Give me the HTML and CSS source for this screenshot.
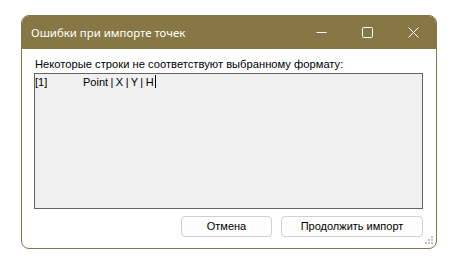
FILE: index.html
```
<!DOCTYPE html>
<html lang="ru">
<head>
    <meta charset="UTF-8">
    <meta name="viewport" content="width=device-width, initial-scale=1.0">
    <title>Ошибки при импорте точек</title>
    <link rel="stylesheet" href="styles.css">
</head>
<body>
    <div class="window">
        <div class="titlebar">
            <span class="title">Ошибки при импорте точек</span>
            <div class="controls">
                <div class="ctl">
                    <svg width="11" height="11" viewBox="0 0 11 11"><path d="M0.5 5.5h10" stroke="#fff" stroke-width="1"/></svg>
                </div>
                <div class="ctl">
                    <svg width="11" height="11" viewBox="0 0 11 11"><rect x="0.5" y="0.5" width="10" height="10" rx="1" fill="none" stroke="#fff" stroke-width="1"/></svg>
                </div>
                <div class="ctl">
                    <svg width="11" height="11" viewBox="0 0 11 11"><path d="M0.5 0.5l10 10M10.5 0.5l-10 10" stroke="#fff" stroke-width="1"/></svg>
                </div>
            </div>
        </div>
        <div class="content">
            <div class="label">Некоторые строки не соответствуют выбранному формату:</div>
            <div class="textbox">
                <div class="line"><span class="num">[1]</span><span class="pts">Point | X | Y | H</span><span class="caret"></span></div>
            </div>
            <div class="buttons">
                <button class="btn btn-cancel">Отмена</button>
                <button class="btn btn-go">Продолжить импорт</button>
            </div>
        </div>
        <svg class="grip" width="8" height="8" viewBox="0 0 8 8">
            <rect x="6" y="0" width="2" height="2" fill="#c4c4c4"/>
            <rect x="3" y="3" width="2" height="2" fill="#c4c4c4"/>
            <rect x="6" y="3" width="2" height="2" fill="#c4c4c4"/>
            <rect x="0" y="6" width="2" height="2" fill="#c4c4c4"/>
            <rect x="3" y="6" width="2" height="2" fill="#c4c4c4"/>
            <rect x="6" y="6" width="2" height="2" fill="#c4c4c4"/>
        </svg>
    </div>
</body>
</html>
```
FILE: styles.css
```
body {
    margin: 0;
    padding: 15px 0 0 21px;
    background: #ffffff;
    font-family: "Liberation Sans", Arial, sans-serif;
}
.window {
    position: relative;
    width: 414px;
    height: 232px;
    border: 1px solid #857645;
    border-radius: 8px;
    background: #ffffff;
    overflow: hidden;
    display: flex;
    flex-direction: column;
}
.titlebar {
    height: 33px;
    background: #877745;
    display: flex;
    align-items: center;
    justify-content: space-between;
}
.title {
    color: #ffffff;
    font-family: "Noto Sans", "Open Sans", sans-serif;
    font-size: 11.4px;
    padding-left: 9px;
    padding-bottom: 1px;
}
.controls {
    display: flex;
    height: 100%;
}
.ctl {
    width: 46px;
    display: flex;
    align-items: center;
    justify-content: center;
}
.content {
    flex: 1;
    display: flex;
    flex-direction: column;
    padding: 9px 13px 0 12px;
}
.label {
    font-size: 11.2px;
    color: #000;
    padding-left: 1px;
    height: 14px;
}
.textbox {
    margin-top: 1px;
    height: 134px;
    border: 1px solid #646464;
    background: #f0f0f0;
    font-size: 11px;
    color: #000;
}
.line {
    display: flex;
    align-items: center;
    padding: 1px 0 0 0;
}
.num {
    width: 48px;
}
.pts {
    word-spacing: -0.6px;
}
.caret {
    display: inline-block;
    width: 1px;
    height: 13px;
    background: #000;
    margin-left: 1px;
}
.buttons {
    display: flex;
    justify-content: flex-end;
    gap: 9px;
    margin-top: 7px;
}
.btn {
    height: 21px;
    border: 1px solid #d0d0d0;
    border-radius: 4px;
    background: #fdfdfd;
    font-family: "Liberation Sans", Arial, sans-serif;
    font-size: 11px;
    color: #000;
    padding: 0 0 1px;
}
.btn-cancel {
    width: 91px;
}
.btn-go {
    width: 142px;
}
.grip {
    position: absolute;
    right: 3px;
    bottom: 4px;
}
```
